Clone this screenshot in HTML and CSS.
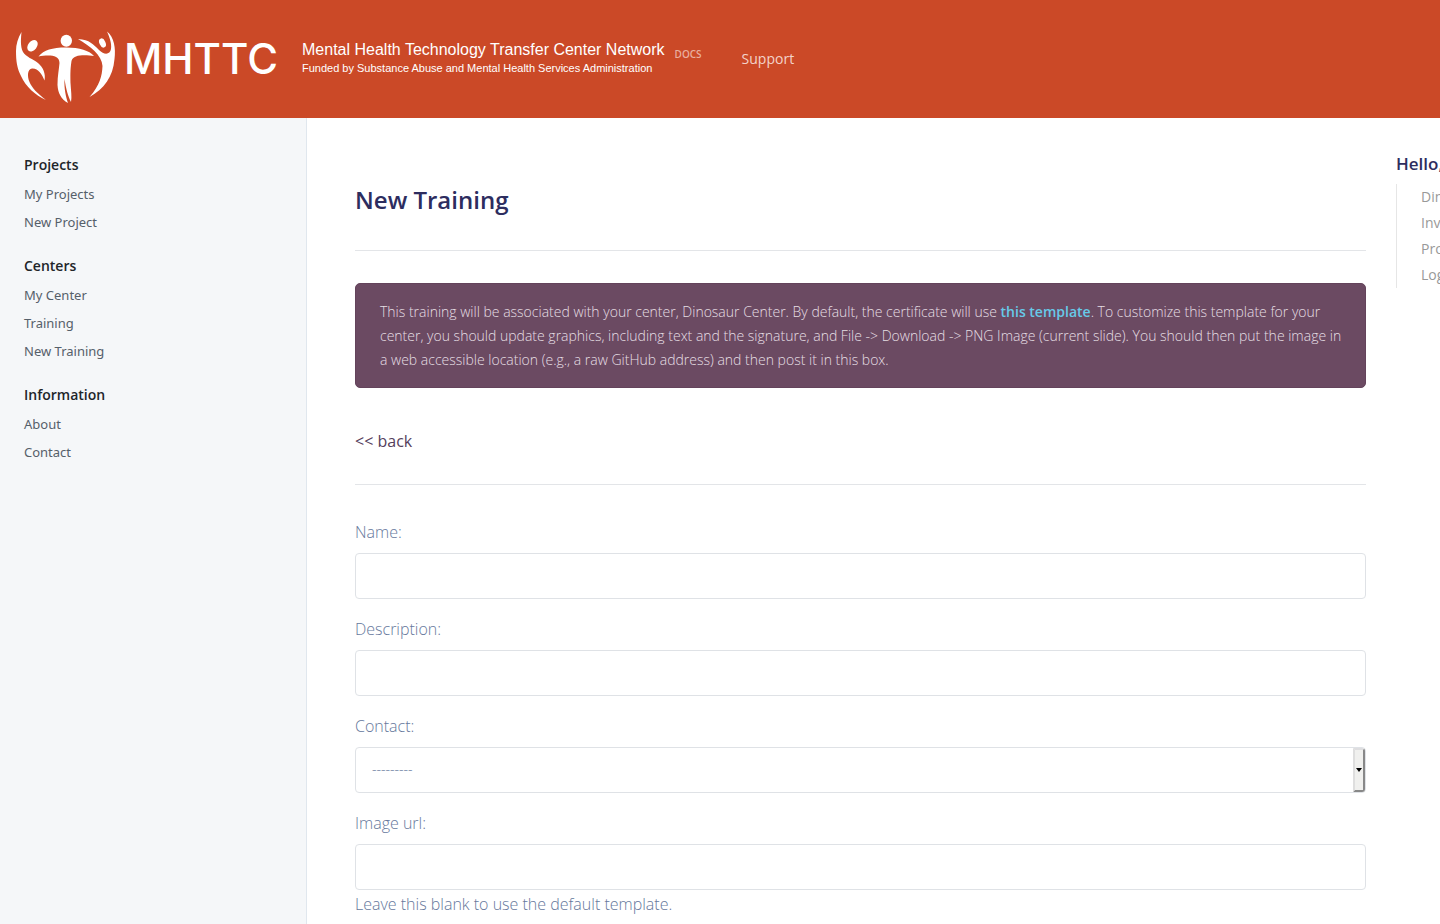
FILE: index.html
```html
<!DOCTYPE html>
<html lang="en">
<head>
<meta charset="utf-8">
<meta name="viewport" content="width=device-width, initial-scale=1">
<title>New Training</title>
<link rel="stylesheet" href="styles.css">
</head>
<body>
<header class="header">
  <a class="brand" href="#">
    <svg class="brand-mark" viewBox="0 0 102 76" aria-hidden="true">
      <path d="M5.500 3C2 9 0 15 0 22C0 32 1 39 5 47C10 58 19 66 30 71C21 64 16 59 13.500 53C11 47 11.500 40 16 39.500C22 39 26 45 28.500 51.500C30 45 27 38 22 34C17 30 10 28 7 23C4 17 5 9 5.500 3Z"/>
      <ellipse cx="16.500" cy="16.700" rx="4.400" ry="6.400" transform="rotate(38 16.5 16.700)"/>
      <ellipse cx="50.300" cy="11.700" rx="5.700" ry="6"/>
      <path d="M22.500 27.500C28 21 36 18.500 50 18.500C64 18.500 73 21.500 78 27C70 26 57 25 55.500 32C54 42 54.500 47 54.500 54C55 62 56 68 55 73C52 67 50 60 48.500 50C48 60 50 68 52 74C45 70 42 64 41.500 56C41.500 47 43 40 43.500 34C43.500 25 31 26 22.500 27.500Z"/>
      <path d="M62 10C74 11 77 15 83 21C88 26 94 26 95 20C96 14 93 7 91 2.500C98 8 100 19 98.500 30C97 48 88 60 73.500 68C84 56 86 47 86.500 37C86 26 74 17 62 10Z"/>
      <ellipse cx="86.500" cy="14" rx="3" ry="4.800" transform="rotate(-25 86.5 14)"/>
    </svg>
    <span class="brand-name">MHTTC</span>
    <span class="brand-lines">
      <span class="brand-title">Mental Health Technology Transfer Center Network</span>
      <span class="brand-sub">Funded by Substance Abuse and Mental Health Services Administration</span>
    </span>
    <span class="brand-docs">DOCS</span>
  </a>
  <nav class="top-nav"><a href="#">Support</a></nav>
</header>
<div class="layout">
  <nav class="sidebar">
    <h2>Projects</h2>
    <ul><li><a href="#">My Projects</a></li><li><a href="#">New Project</a></li></ul>
    <h2>Centers</h2>
    <ul><li><a href="#">My Center</a></li><li><a href="#">Training</a></li><li><a href="#">New Training</a></li></ul>
    <h2>Information</h2>
    <ul><li><a href="#">About</a></li><li><a href="#">Contact</a></li></ul>
  </nav>
  <main class="main">
    <h1>New Training</h1>
    <hr>
    <p class="notice">This training will be associated with your center, Dinosaur Center. By default, the certificate will use <a href="#">this template</a>. To customize this template for your center, you should update graphics, including text and the signature, and File -&gt; Download -&gt; PNG Image (current slide). You should then put the image in a web accessible location (e.g., a raw GitHub address) and then post it in this box.</p>
    <a class="back" href="#">&lt;&lt; back</a>
    <hr>
    <form class="form">
      <div class="field"><label for="name">Name:</label><input id="name" type="text"></div>
      <div class="field"><label for="description">Description:</label><input id="description" type="text"></div>
      <div class="field"><label for="contact">Contact:</label>
        <div class="select-box">
          <select id="contact"><option>---------</option></select>
          <span class="select-arrow" aria-hidden="true"></span>
        </div>
      </div>
      <div class="field"><label for="image-url">Image url:</label><input id="image-url" type="text"><span class="help">Leave this blank to use the default template.</span></div>
    </form>
  </main>
  <aside class="account">
    <h2>Hello,</h2>
    <ul><li><a href="#">Dinosaur</a></li><li><a href="#">Invite</a></li><li><a href="#">Profile</a></li><li><a href="#">Logout</a></li></ul>
  </aside>
</div>
</body>
</html>
```
FILE: styles.css
```css
* { box-sizing: border-box; }
body {
  margin: 0;
  overflow-x: hidden;
  background: #fff;
  color: #66789c;
  font: 300 16px/24px "Open Sans", sans-serif;
}
a { color: inherit; text-decoration: none; }
h1, h2, ul, p { margin: 0; }
ul { padding: 0; list-style: none; }

.header {
  display: flex;
  align-items: center;
  gap: 40px;
  height: 118px;
  padding: 0 16px;
  background: #cb4927;
}
.brand { display: flex; align-items: center; color: #fff; white-space: nowrap; }
.brand-mark { width: 102px; height: 76px; margin-top: 16px; fill: #fff; }
.brand-name {
  width: 178px;
  margin-left: 6px;
  font: 500 42px/48px Inter, sans-serif;
}
.brand-lines { display: flex; flex-direction: column; margin-top: -2px; font-family: "Liberation Sans", sans-serif; font-weight: 400; }
.brand-title { font-size: 16px; line-height: 20px; }
.brand-sub { font-size: 11px; line-height: 16px; }
.brand-docs { margin: -10px 0 0 10px; color: #e9ae9f; font-size: 10px; font-weight: 600; }
.top-nav { color: #f3d3ca; font-size: 14px; font-weight: 400; }

.layout { display: flex; min-height: calc(100vh - 118px); }
.sidebar {
  flex: 0 0 307px;
  padding: 36px 24px;
  background: #f5f7f9;
  border-right: 1px solid #e0e7ee;
}
.sidebar h2 { margin-bottom: 4px; color: #212529; font-size: 14px; font-weight: 600; line-height: 22px; }
.sidebar ul { margin-bottom: 19px; }
.sidebar li { color: #55606a; font: 400 13px/20px "Noto Sans", "Open Sans", sans-serif; padding: 4px 0; }

.main { flex: 1; min-width: 0; padding: 64px 30px 32px 48px; }
h1 { color: #2d2d5f; font-size: 24px; font-weight: 600; line-height: 36px; }
hr { margin: 32px 0; border: 0; border-top: 1px solid #e3e5e8; }
.notice {
  margin-bottom: 41px;
  padding: 16px 20px 15px 24px;
  border: 1px solid #64435b;
  border-radius: 5px;
  background: #6b4a62;
  color: #e6dfe4;
  font-size: 14px;
}
.notice a { color: #67c9e8; font-weight: 600; }
.back { display: block; color: #55405c; font-weight: 400; }
.back + hr { margin: 31px 0 35px; }

.field { margin-bottom: 18px; }
.field label { display: block; margin-bottom: 9px; }
.field input, .field select {
  display: block;
  width: 100%;
  height: 46px;
  padding: 0 16px;
  border: 1px solid #dfe2e6;
  border-radius: 4px;
  background: #fff;
  color: #66789c;
  font: 300 14px/24px "Open Sans", sans-serif;
}
.field select { appearance: none; padding-bottom: 2px; }
.select-box { position: relative; }
.select-arrow {
  position: absolute;
  top: 1px;
  right: 1px;
  bottom: 1px;
  display: grid;
  place-items: center;
  width: 12px;
  border: solid;
  border-width: 2px;
  border-color: #dedee0 #888 #888 #dedede;
  border-radius: 0 3px 3px 0;
  background: #f0f0ee;
  pointer-events: none;
}
.select-arrow::after {
  content: "";
  border: 3px solid transparent;
  border-top: 4px solid #000;
  border-bottom: 0;
}
.help { display: block; padding-top: 2px; }

.account { flex: 0 0 44px; padding-top: 34px; overflow: hidden; white-space: nowrap; }
.account h2 { color: #2d2d5f; font-size: 17px; font-weight: 600; line-height: 24px; }
.account ul { margin-top: 8px; padding-left: 24px; border-left: 1px solid #e6e6e6; }
.account li { color: #999; font-size: 14px; font-weight: 400; line-height: 26px; }
```
